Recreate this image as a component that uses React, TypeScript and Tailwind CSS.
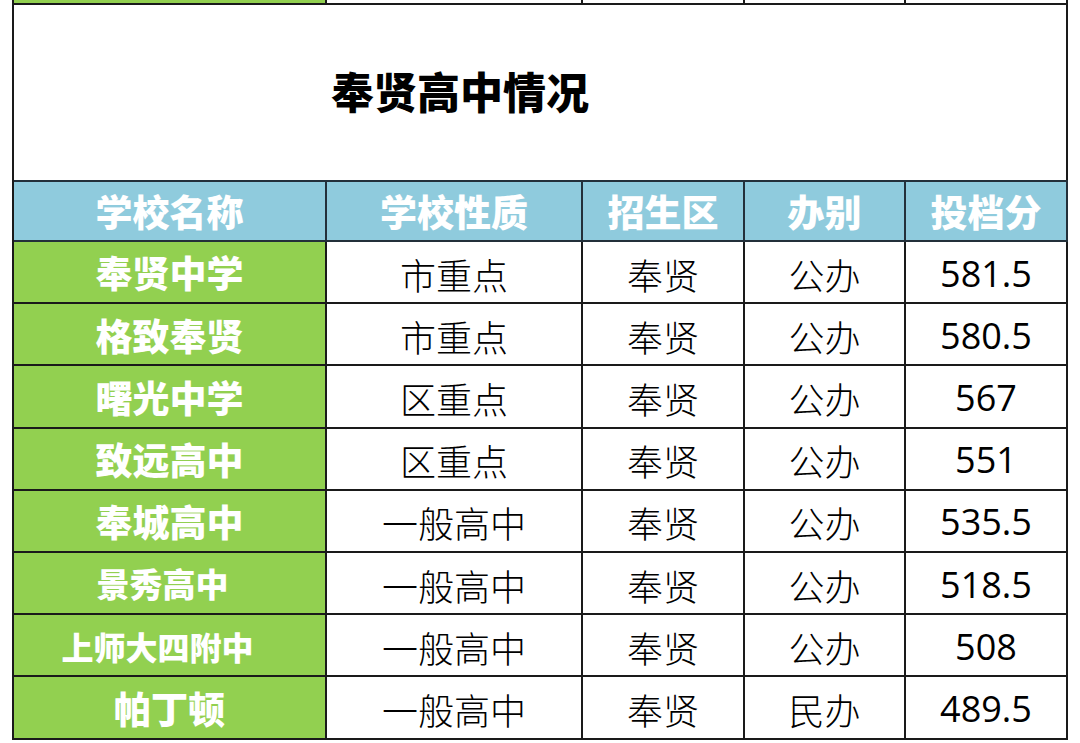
import React from "react";

const rows: { name: string; size: string; type: string; area: string; kind: string; score: string }[] = [
  { name: "奉贤中学", size: "text-[37px]", type: "市重点", area: "奉贤", kind: "公办", score: "581.5" },
  { name: "格致奉贤", size: "text-[37px]", type: "市重点", area: "奉贤", kind: "公办", score: "580.5" },
  { name: "曙光中学", size: "text-[37px]", type: "区重点", area: "奉贤", kind: "公办", score: "567" },
  { name: "致远高中", size: "text-[37px]", type: "区重点", area: "奉贤", kind: "公办", score: "551" },
  { name: "奉城高中", size: "text-[37px]", type: "一般高中", area: "奉贤", kind: "公办", score: "535.5" },
  { name: "景秀高中", size: "text-[33px] pr-[14px]", type: "一般高中", area: "奉贤", kind: "公办", score: "518.5" },
  { name: "上师大四附中", size: "text-[32px] pr-[24px]", type: "一般高中", area: "奉贤", kind: "公办", score: "508" },
  { name: "帕丁顿", size: "text-[37px]", type: "一般高中", area: "奉贤", kind: "民办", score: "489.5" },
];

const cjk = "font-['Noto_Sans_CJK_SC',sans-serif]";
const num = "font-['Open_Sans','Noto_Sans_CJK_SC',sans-serif]";

export default function App() {
  return (
    <div className={`w-[1080px] h-[743px] bg-white overflow-hidden ${cjk}`}>
      <div className="ml-[12px] w-[1056px] border-l-2 border-[#1a1a1a]">
        {/* sliver of previous row */}
        <div className="flex h-[5px] border-b-2 border-[#1a1a1a]">
          <div className="w-[313px] bg-[#92d050] border-r-2 border-[#1a1a1a]" />
          <div className="w-[256px] border-r-2 border-[#1a1a1a]" />
          <div className="w-[162px] border-r-2 border-[#1a1a1a]" />
          <div className="w-[161px] border-r-2 border-[#1a1a1a]" />
          <div className="flex-1 border-r-2 border-[#1a1a1a]" />
        </div>
        {/* title */}
        <div className="flex h-[175px] border-r-2 border-[#1a1a1a]">
          <div className="w-[892px] flex items-center justify-center pb-[4px]">
            <span className="text-[43px] font-black text-black">奉贤高中情况</span>
          </div>
        </div>
        {/* header */}
        <div className="flex h-[62px] bg-[#8fcbdd] border-y-2 border-[#23303a] text-white font-black text-[37px]">
          <div className="w-[313px] border-r-2 border-[#23303a] flex items-center justify-center pt-[2px]">学校名称</div>
          <div className="w-[256px] border-r-2 border-[#23303a] flex items-center justify-center pt-[2px]">学校性质</div>
          <div className="w-[162px] border-r-2 border-[#23303a] flex items-center justify-center pt-[2px]">招生区</div>
          <div className="w-[161px] border-r-2 border-[#23303a] flex items-center justify-center pt-[2px]">办别</div>
          <div className="flex-1 border-r-2 border-[#23303a] flex items-center justify-center pt-[2px]">投档分</div>
        </div>
        {rows.map((r) => (
          <div key={r.name} className="flex h-[62.2px] border-b-2 border-[#1a1a1a] text-black">
            <div className={`w-[313px] bg-[#92d050] border-r-2 border-[#1a1a1a] flex items-center justify-center pt-[2px] text-white font-black ${r.size}`}>
              {r.name}
            </div>
            <div className="w-[256px] border-r-2 border-[#1a1a1a] flex items-center justify-center pt-[3px] text-[36px] font-light">
              {r.type}
            </div>
            <div className="w-[162px] border-r-2 border-[#1a1a1a] flex items-center justify-center pt-[3px] text-[36px] font-light">
              {r.area}
            </div>
            <div className="w-[161px] border-r-2 border-[#1a1a1a] flex items-center justify-center pt-[3px] text-[36px] font-light">
              {r.kind}
            </div>
            <div className={`flex-1 border-r-2 border-[#1a1a1a] flex items-center justify-center pt-[3px] text-[36px] font-normal ${num}`}>
              {r.score}
            </div>
          </div>
        ))}
      </div>
    </div>
  );
}
